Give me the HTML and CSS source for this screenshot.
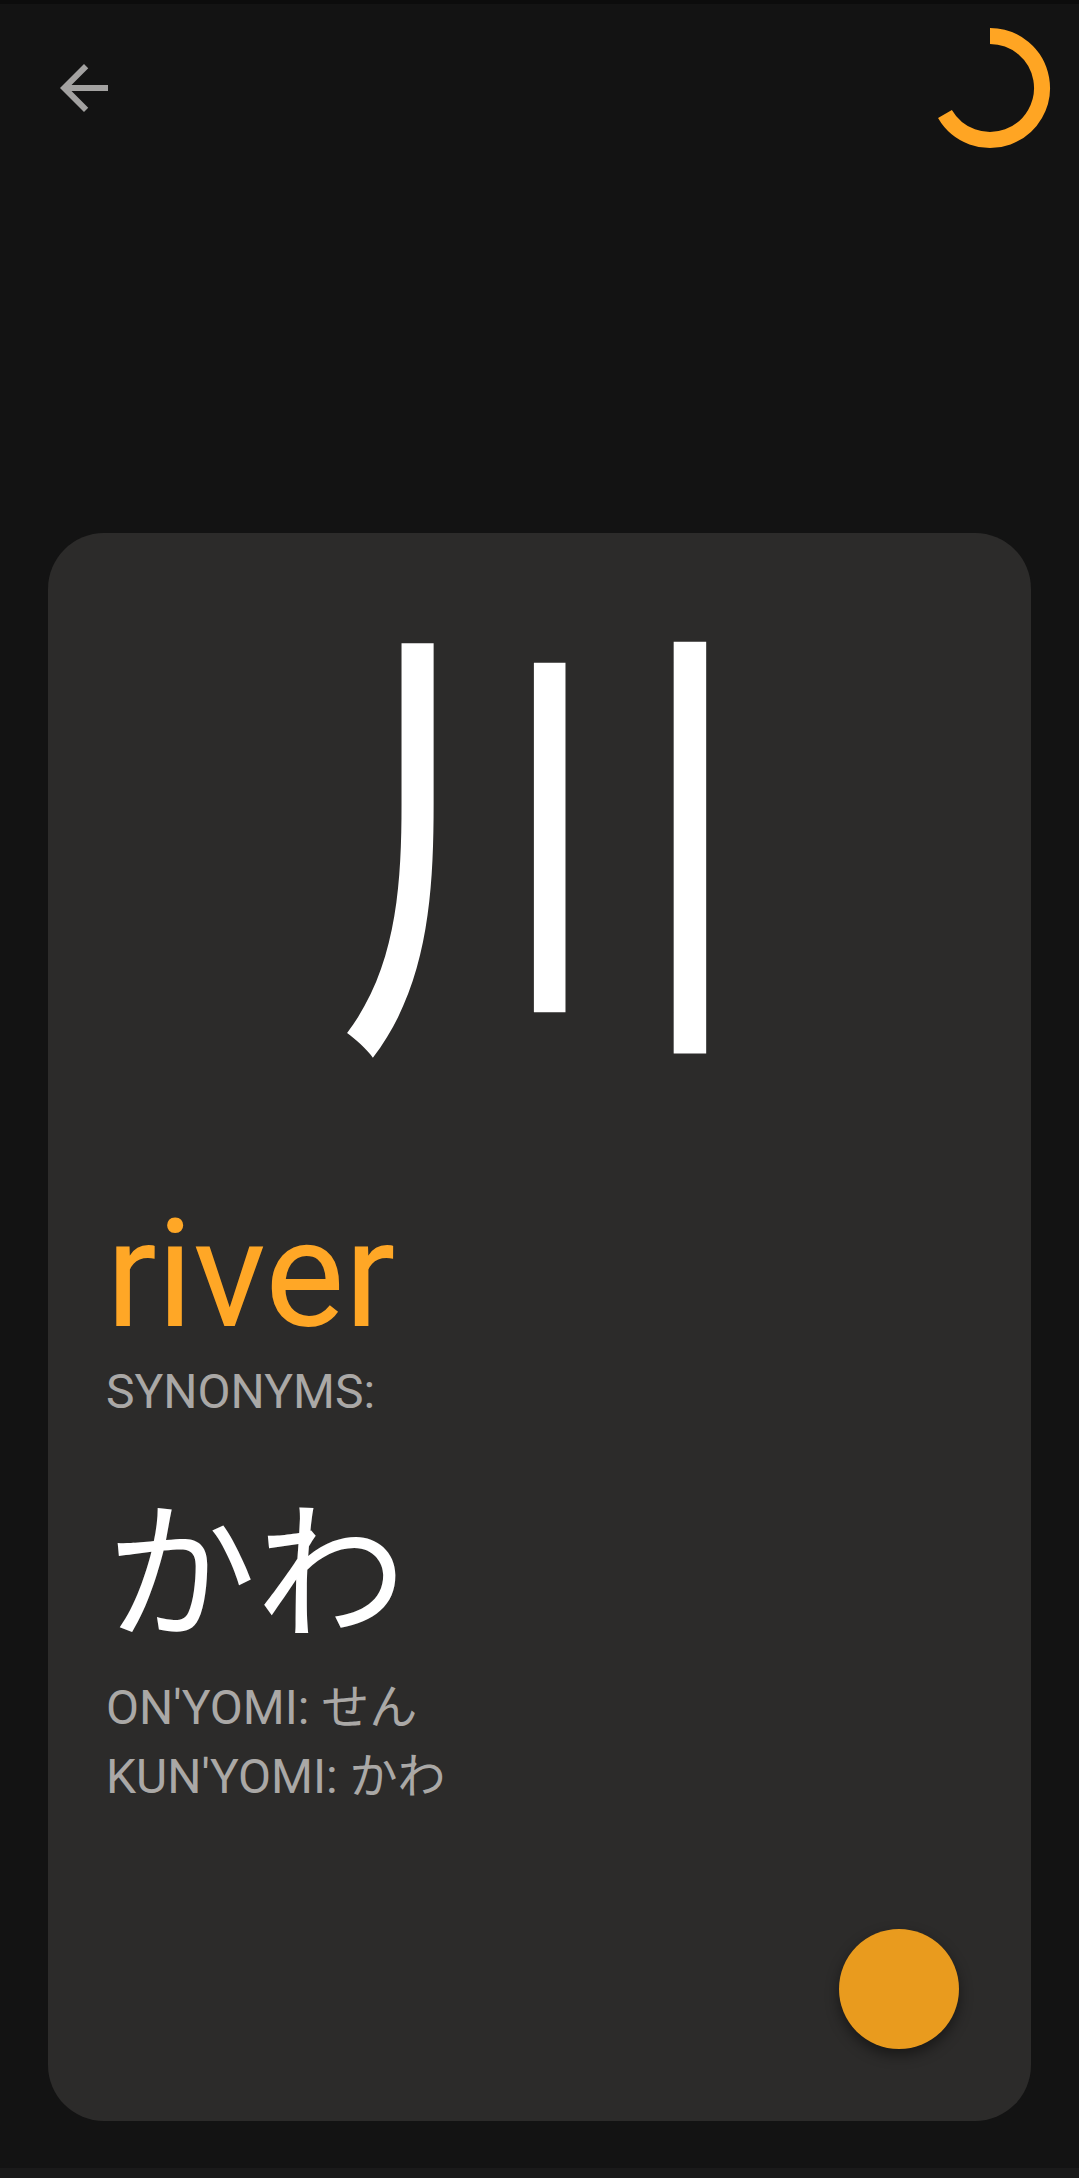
FILE: index.html
```html
<!DOCTYPE html>
<html lang="ja">
<head>
<meta charset="utf-8">
<title>川</title>
<link rel="stylesheet" href="styles.css">
</head>
<body>
<div class="screen">
  <div class="status-strip"></div>
  <header class="topbar">
    <button class="icon-btn" aria-label="Back">
      <svg class="back-icon" viewBox="0 0 24 24" width="72" height="72"><path d="M20 11H7.83l5.59-5.59L12 4l-8 8 8 8 1.41-1.41L7.83 13H20v-2z"/></svg>
    </button>
    <svg class="spinner" viewBox="0 0 136 136" width="136" height="136"><path d="M68 16 A52 52 0 1 1 22.97 94" /></svg>
  </header>
  <main class="card">
    <div class="kanji">川</div>
    <div class="meaning">river</div>
    <div class="label">SYNONYMS:</div>
    <div class="kana">かわ</div>
    <div class="reading first">ON'YOMI: せん</div>
    <div class="reading">KUN'YOMI: かわ</div>
    <button class="fab" aria-label="Action"></button>
  </main>
  <div class="nav-strip"></div>
</div>
</body>
</html>
```
FILE: styles.css
```css
html, body {
  margin: 0;
  padding: 0;
  background: #131313;
}
.screen {
  width: 1079px;
  height: 2178px;
  display: flex;
  flex-direction: column;
  background: #131313;
  font-family: Roboto, "Noto Sans CJK JP", sans-serif;
}
.status-strip {
  height: 4px;
  background: #0c0c0c;
  flex: none;
}
.topbar {
  height: 168px;
  flex: none;
  display: flex;
  align-items: center;
  justify-content: space-between;
  padding: 0 21px 0 48px;
}
.icon-btn {
  width: 72px;
  height: 72px;
  padding: 0;
  border: 0;
  background: none;
  display: flex;
}
.back-icon {
  fill: #a3a2a1;
}
.spinner {
  fill: none;
  stroke: #ffa523;
  stroke-width: 16;
  stroke-linecap: butt;
}
.card {
  flex: 1 1 auto;
  min-height: 0;
  margin: 361px 48px 47px;
  background: #2c2b2a;
  border-radius: 56px;
  display: flex;
  flex-direction: column;
  padding: 0 0 72px 58px;
}
.card > * {
  flex: none;
}
.kanji {
  margin: 39px 0 0 -58px;
  padding-left: 9px;
  text-align: center;
  font-family: "Noto Sans CJK JP", sans-serif;
  font-size: 475px;
  line-height: 475px;
  height: 475px;
  color: #ffffff;
  transform: scaleX(0.876);
}
.meaning {
  margin-top: 143px;
  font-size: 150px;
  line-height: 170px;
  height: 170px;
  color: #ffa726;
}
.label {
  margin-top: 2px;
  font-size: 48px;
  line-height: 60px;
  height: 60px;
  color: #aaa8a6;
}
.kana {
  margin-top: 50px;
  font-family: "Noto Sans CJK JP", sans-serif;
  font-size: 150px;
  line-height: 180px;
  height: 180px;
  color: #ffffff;
}
.reading {
  font-size: 48px;
  line-height: 69px;
  height: 69px;
  color: #aaa8a6;
}
.reading.first {
  margin-top: 21px;
}
.fab {
  align-self: flex-end;
  margin: auto 72px 0 0;
  width: 120px;
  height: 120px;
  border-radius: 50%;
  border: 0;
  padding: 0;
  background: #e99b1e;
  box-shadow: 0 6px 14px rgba(0, 0, 0, 0.45);
}
.nav-strip {
  height: 10px;
  flex: none;
  background: #1a1a1a;
}
```
